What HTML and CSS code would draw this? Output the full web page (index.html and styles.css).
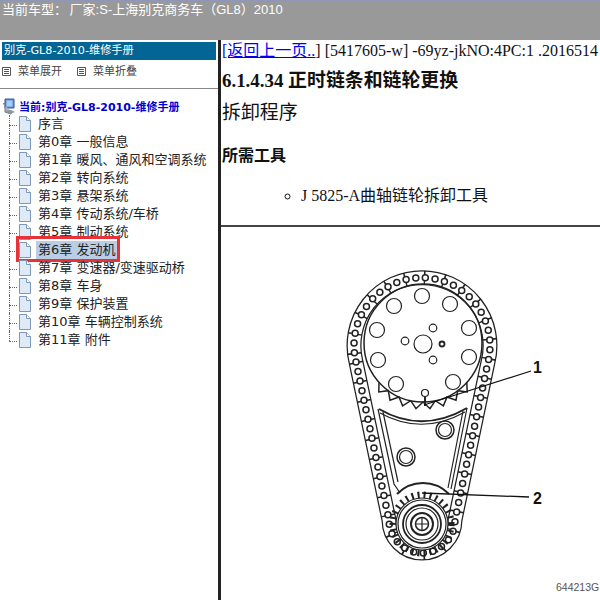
FILE: index.html
```html
<!DOCTYPE html>
<html lang="zh-CN">
<head>
  <meta charset="UTF-8">
  <title>别克-GL8-2010-维修手册</title>
  <link rel="stylesheet" href="styles.css">
</head>
<body>
  <svg class="defs" width="0" height="0">
    <symbol id="doc" viewBox="0 0 14 16">
      <path d="M1.500 .5h7l4 4v11h-11z" fill="#dfeaf8" stroke="#7d97b5"/>
      <path d="M8.500 .5v4h4" fill="#fff" stroke="#7d97b5"/>
    </symbol>
    <symbol id="box" viewBox="0 0 9 9">
      <path d="M.5 .5h8v8h-8z" fill="#fff" stroke="#555"/>
      <path d="M2 2.500h5M2 4.500h5M2 6.500h5" stroke="#555"/>
    </symbol>
    <path id="chain" d="M356 362L389 520A33 33 0 0 0 455 520L488 362A68 68 0 1 0 356 362Z"/>
  </svg>

  <header class="topbar">当前车型： 厂家:S-上海别克商务车（GL8）2010</header>

  <div class="page">
    <aside class="side">
      <div class="side-title">别克-GL8-2010-维修手册</div>
      <div class="side-tools">
        <span class="tool"><svg><use href="#box"/></svg>菜单展开</span>
        <span class="tool"><svg><use href="#box"/></svg>菜单折叠</span>
      </div>
      <div class="tree-root">
        <svg class="pc" viewBox="0 0 14 17">
          <path d="M3 1h9v9H3z" fill="#5f8fd8" stroke="#2f5aa8"/>
          <path d="M4.500 2.500h6v6h-6z" fill="#a9cdf5"/>
          <path d="M1 6l2-1v9l6 2v-3" fill="#aab4c0" stroke="#6d7785"/>
          <path d="M3 13l5 3 5-2-4-2z" fill="#8b95a3"/>
        </svg>
        <span>当前:别克-GL8-2010-维修手册</span>
      </div>
      <ul class="tree">
        <li><svg><use href="#doc"/></svg><span>序言</span></li>
        <li><svg><use href="#doc"/></svg><span>第0章 一般信息</span></li>
        <li><svg><use href="#doc"/></svg><span>第1章 暖风、通风和空调系统</span></li>
        <li><svg><use href="#doc"/></svg><span>第2章 转向系统</span></li>
        <li><svg><use href="#doc"/></svg><span>第3章 悬架系统</span></li>
        <li><svg><use href="#doc"/></svg><span>第4章 传动系统/车桥</span></li>
        <li><svg><use href="#doc"/></svg><span>第5章 制动系统</span></li>
        <li class="current"><svg><use href="#doc"/></svg><span>第6章 发动机</span><i class="mark"></i></li>
        <li><svg><use href="#doc"/></svg><span>第7章 变速器/变速驱动桥</span></li>
        <li><svg><use href="#doc"/></svg><span>第8章 车身</span></li>
        <li><svg><use href="#doc"/></svg><span>第9章 保护装置</span></li>
        <li><svg><use href="#doc"/></svg><span>第10章 车辆控制系统</span></li>
        <li><svg><use href="#doc"/></svg><span>第11章 附件</span></li>
      </ul>
    </aside>

    <main class="content">
      <section class="doc-text">
        <p class="crumb"><a href="#">[返回上一页..</a>] [5417605-w] -69yz-jkNO:4PC:1 .2016514</p>
        <h3>6.1.4.34 正时链条和链轮更换</h3>
        <h3 class="plain">拆卸程序</h3>
        <h4>所需工具</h4>
        <ul class="tools-list">
          <li>J 5825-A曲轴链轮拆卸工具</li>
        </ul>
      </section>

      <section class="figure">
        <svg class="diagram" viewBox="221 227 379 373" fill="none" stroke="#222" stroke-width="1.2">
          <!-- chain -->
          <use href="#chain" stroke-width="15"/>
          <use href="#chain" stroke="#fff" stroke-width="12.500"/>
          <use href="#chain" stroke-width="14" stroke-dasharray="1.500 18"/>
          <use href="#chain" stroke-width="7.500" stroke-linecap="round" stroke-dasharray="0 9.750"/>
          <use href="#chain" stroke="#fff" stroke-width="4.500" stroke-linecap="round" stroke-dasharray="0 9.750"/>

          <!-- cam sprocket -->
          <circle cx="423" cy="343" r="59" stroke-width="1.500"/>
          <circle cx="423" cy="344" r="9"/>
          <circle cx="422" cy="296" r="7.500"/>
          <circle cx="450" cy="304" r="7.500"/>
          <circle cx="469" cy="328" r="7.500"/>
          <circle cx="469" cy="357" r="7.500"/>
          <circle cx="453" cy="382" r="7.500"/>
          <circle cx="396" cy="384" r="7.500"/>
          <circle cx="378" cy="360" r="7.500"/>
          <circle cx="377" cy="330" r="7.500"/>
          <circle cx="394" cy="306" r="7.500"/>
          <circle cx="433" cy="328" r="3.800"/>
          <circle cx="405" cy="341" r="3.800"/>
          <circle cx="433" cy="360" r="3.800"/>
          <circle cx="442" cy="344" r="2.500" stroke-width="1.800"/>
          <circle cx="425" cy="393" r="3.500"/>
          <path d="M425 397v9" stroke-width="2"/>
          <path stroke-width="1.500" d="M379 382.500L378.800 392 388.300 390.700 390 400.200 399 397 402.600 405.800 410.700 400.700 416 408.700 423 402 430 408.700 435.300 400.700 443.400 405.800 447 397 456 400.200 457.700 390.700 467.200 392 466.800 382.500"/>

          <!-- plate between sprockets -->
          <path d="M379 409Q422 434 467 408" stroke-width="2"/>
          <path d="M380 413Q422 436 465 412"/>
          <path d="M378 409L394 484 400 493M383 412L398 482"/>
          <path d="M467 408L451 489M463 411L448 488"/>
          <circle cx="445" cy="430" r="9" stroke-width="1.500"/>
          <circle cx="445" cy="430" r="6.500"/>
          <circle cx="406" cy="457" r="9" stroke-width="1.500"/>
          <circle cx="406" cy="457" r="6.500"/>

          <!-- crank sprocket -->
          <path d="M397 494A36 36 0 0 1 449 494" stroke-width="2"/>
          <circle cx="422" cy="524" r="29" stroke-width="7" stroke-dasharray="2 4"/>
          <circle cx="422" cy="524" r="26" fill="#fff"/>
          <circle cx="422" cy="524" r="24"/>
          <circle cx="422" cy="524" r="19" stroke-width="1.800"/>
          <circle cx="422" cy="524" r="16"/>
          <circle cx="422" cy="524" r="11" stroke-width="2"/>
          <circle cx="422" cy="524" r="6.500" stroke-width="1.500"/>
          <path d="M422 518v12M416 524h12"/>

          <!-- leaders -->
          <path d="M424 405L531 371M422 493L529 497" stroke="#111" stroke-width="1.300"/>
          <text class="callout" x="533" y="373">1</text>
          <text class="callout" x="533" y="504">2</text>
          <text class="fig-code" x="556" y="591">644213G</text>
        </svg>
      </section>
    </main>
  </div>
</body>
</html>
```

FILE: styles.css
```css
* {
  box-sizing: border-box;
}

html, body {
  height: 100%;
}

body {
  margin: 0;
  overflow: hidden;
  background: #fff;
  color: #222;
  display: flex;
  flex-direction: column;
  font-family: "DejaVu Sans", "Noto Sans CJK SC", sans-serif;
}

.defs {
  position: absolute;
}

.topbar {
  height: 40px;
  flex-shrink: 0;
  padding: 0 2px;
  background: #999;
  border-top: 1px solid #8f96b8;
  color: #fff;
  font-family: "Liberation Sans", "Noto Sans CJK SC", sans-serif;
  font-size: 13px;
  line-height: 17px;
  word-spacing: -1px;
}

.page {
  flex: 1;
  display: flex;
  min-height: 0;
}

.side {
  width: 218px;
  flex-shrink: 0;
  padding: 2px 2px 0;
}

.side-title {
  height: 18px;
  padding-left: 2px;
  background: #036594;
  color: #fff;
  font-size: 11.200px;
  line-height: 18px;
}

.side-tools {
  height: 29px;
  margin: 0 -2px;
  padding: 3px 2px 0;
  display: flex;
  gap: 15px;
  border-bottom: 1px solid #888;
  color: #444;
  font-size: 11px;
  line-height: 17px;
}

.tool {
  display: flex;
  align-items: center;
  align-self: flex-start;
  gap: 7px;
}

.tool svg {
  width: 9px;
  height: 9px;
}

.tree-root {
  height: 18px;
  margin-top: 8px;
  display: flex;
  align-items: center;
  gap: 3px;
  color: #0000cc;
  font-size: 11px;
  font-weight: bold;
}

.tree-root .pc {
  width: 14px;
  height: 17px;
  flex-shrink: 0;
}

.tree {
  list-style: none;
  margin: 0 0 0 7px;
  padding: 0;
}

.tree li {
  position: relative;
  height: 18px;
  padding-left: 9px;
  display: flex;
  align-items: center;
  font-size: 13px;
  line-height: 18px;
  white-space: nowrap;
}

.tree li::before {
  content: '';
  position: absolute;
  left: 0;
  top: 0;
  width: 8px;
  height: 10px;
  border-bottom: 1px dotted #666;
}

.tree li::after {
  content: '';
  position: absolute;
  left: 0;
  top: 0;
  bottom: 0;
  border-left: 1px dotted #666;
}

.tree li:last-child::after {
  bottom: 8px;
}

.tree li svg {
  width: 14px;
  height: 16px;
  flex-shrink: 0;
  margin-right: 6px;
}

.tree li.current span {
  background: #b9cde5;
  padding: 0 2px;
  margin-left: -2px;
}

/* red mark over the current row */
.mark {
  position: absolute;
  left: 7px;
  top: -5px;
  width: 104px;
  height: 26px;
  border: 3px solid #e8323a;
}

.content {
  flex: 1;
  min-width: 0;
  display: flex;
  flex-direction: column;
  border-left: 3px solid #222;
  font-family: "Liberation Serif", "Noto Sans CJK SC", serif;
  color: #111;
}

.doc-text {
  height: 187px;
  flex-shrink: 0;
  padding-left: 1px;
  border-bottom: 2px solid #444;
  overflow: hidden;
}

.crumb {
  margin: 1px 0 0;
  font-size: 16px;
  line-height: 19px;
  white-space: nowrap;
}

.crumb a {
  color: #0000ee;
}

h3 {
  margin: 10px 0 0;
  font-size: 18.900px;
  line-height: 22px;
}

h3.plain {
  margin-top: 10px;
  font-weight: normal;
}

h4 {
  margin: 21px 0 0;
  font-size: 16px;
  line-height: 22px;
}

.tools-list {
  list-style: circle;
  margin: 18px 0 0;
  padding-left: 79px;
  font-size: 16px;
  line-height: 22px;
}

.figure {
  flex: 1;
  min-height: 0;
}

.diagram {
  display: block;
  width: 379px;
  height: 373px;
}

.callout {
  fill: #111;
  stroke: none;
  font-family: "Liberation Sans", sans-serif;
  font-size: 16px;
  font-weight: bold;
}

.fig-code {
  fill: #555;
  stroke: none;
  font-family: "Liberation Sans", sans-serif;
  font-size: 10.500px;
}
```
